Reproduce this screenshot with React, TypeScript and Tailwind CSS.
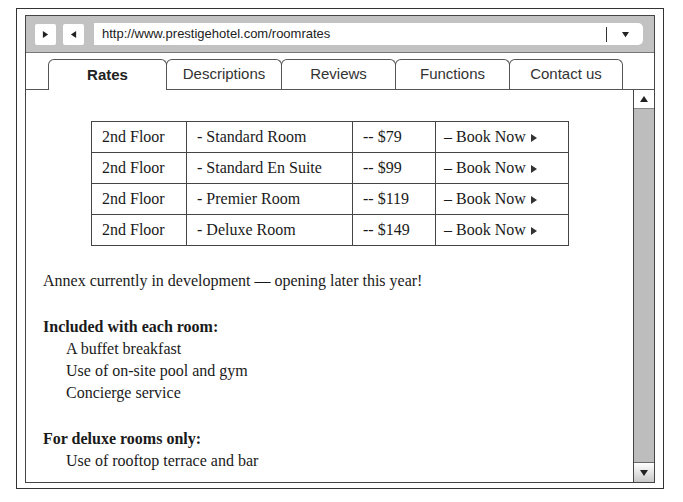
import React from 'react';

const ROOMS = [
  { floor: '2nd Floor', name: '- Standard Room', price: '-- $79' },
  { floor: '2nd Floor', name: '- Standard En Suite', price: '-- $99' },
  { floor: '2nd Floor', name: '- Premier Room', price: '-- $119' },
  { floor: '2nd Floor', name: '- Deluxe Room', price: '-- $149' },
];

const TABS = [
  { label: 'Rates', w: 'w-[119px]' },
  { label: 'Descriptions', w: 'w-[116px]' },
  { label: 'Reviews', w: 'w-[115px]' },
  { label: 'Functions', w: 'w-[115px]' },
  { label: 'Contact us', w: 'w-[114px]' },
];

const Tri: React.FC<{ dir: 'left' | 'right' | 'up' | 'down'; size?: number; color?: string }> = ({
  dir,
  size = 7,
  color = '#222',
}) => {
  const pts = {
    right: '1,0 7,4 1,8',
    left: '7,0 1,4 7,8',
    up: '0,7 4,1 8,7',
    down: '0,1 4,7 8,1',
  }[dir];
  return (
    <svg width={size} height={size} viewBox="0 0 8 8" className="inline-block">
      <polygon points={pts} fill={color} />
    </svg>
  );
};

const App: React.FC = () => {
  return (
    <div className="w-[683px] h-[502px] bg-white pt-[8px] pl-[16px]">
      <div className="w-[648px] h-[481px] border border-[#333] pl-[8px] pr-[8px] pt-[6px] pb-[5px]">
        <div className="h-full border border-[#444] flex flex-col">
          {/* toolbar */}
          <div className="h-[37px] bg-[#c2c2c2] border-b border-[#777] flex items-center pl-[9px] pr-[11px] shrink-0">
            <div className="w-[21px] h-[21px] bg-white rounded-[2px] flex items-center justify-center">
              <Tri dir="right" size={7} />
            </div>
            <div className="w-[21px] h-[21px] bg-white rounded-[2px] flex items-center justify-center ml-[7px]">
              <Tri dir="left" size={7} />
            </div>
            <div className="flex-1 h-[22px] bg-white rounded-r-[5px] ml-[10px] flex items-center pl-[8px] font-['Liberation_Sans',sans-serif] text-[13px] text-[#222]">
              <span className="flex-1">http://www.prestigehotel.com/roomrates</span>
              <div className="w-px h-[15px] bg-[#333]"></div>
              <div className="w-[36px] flex justify-center">
                <Tri dir="down" size={7} />
              </div>
            </div>
          </div>

          {/* tabs */}
          <div className="h-[37px] border-b border-[#555] flex items-end pl-[22px] shrink-0 font-['Liberation_Sans',sans-serif] text-[15px] text-[#333]">
            {TABS.map((t, i) => (
              <div
                key={t.label}
                className={
                  i === 0
                    ? `${t.w} h-[31px] -mb-px pt-[1px] bg-white border border-b-0 border-[#555] rounded-t-[6px] flex items-center justify-center font-bold text-[#222]`
                    : `${t.w} h-[30px] -ml-px border border-b-0 border-[#555] rounded-t-[6px] flex items-center justify-center`
                }
              >
                {t.label}
              </div>
            ))}
          </div>

          {/* content */}
          <div className="flex-1 flex min-h-0">
            <div className="flex-1 pl-[17px] pt-[31px] font-['Liberation_Serif',serif] text-[16px] leading-[22px] text-[#1a1a1a]">
              <table className="ml-[48px] border-collapse">
                <tbody>
                  {ROOMS.map((r) => (
                    <tr key={r.name} className="h-[31px]">
                      <td className="w-[95px] border border-[#444] pl-[10px]">{r.floor}</td>
                      <td className="w-[166px] border border-[#444] pl-[10px]">{r.name}</td>
                      <td className="w-[83px] border border-[#444] pl-[10px]">{r.price}</td>
                      <td className="w-[133px] border border-[#444] pl-[8px]">
                        – Book Now <Tri dir="right" size={8} color="#333" />
                      </td>
                    </tr>
                  ))}
                </tbody>
              </table>

              <p className="mt-[24px]">Annex currently in development — opening later this year!</p>

              <p className="mt-[24px] font-bold">Included with each room:</p>
              <ul className="pl-[23px]">
                <li>A buffet breakfast</li>
                <li>Use of on-site pool and gym</li>
                <li>Concierge service</li>
              </ul>

              <p className="mt-[24px] font-bold">For deluxe rooms only:</p>
              <ul className="pl-[23px]">
                <li>Use of rooftop terrace and bar</li>
              </ul>
            </div>

            {/* scrollbar */}
            <div className="w-[21px] border-l border-[#444] flex flex-col shrink-0">
              <div className="h-[19px] bg-white border-b border-[#888] flex items-center justify-center">
                <Tri dir="up" size={8} />
              </div>
              <div className="flex-1 bg-[#bdbdbd]"></div>
              <div className="h-[20px] bg-gradient-to-b from-white to-[#c8c8c8] border-t border-[#666] flex items-center justify-center">
                <Tri dir="down" size={8} />
              </div>
            </div>
          </div>
        </div>
      </div>
    </div>
  );
};

export default App;
